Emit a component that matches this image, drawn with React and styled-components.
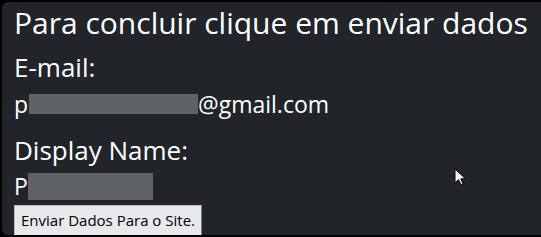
import React from "react";
import styled, { createGlobalStyle } from "styled-components";

const GlobalStyle = createGlobalStyle`
  html, body {
    margin: 0;
    padding: 0;
    background: #000;
  }
  body {
    padding: 2px 0 0 2px;
    font-family: "Open Sans", "Noto Sans", sans-serif;
    color: #fff;
    overflow: hidden;
  }
`;

const Card = styled.section`
  position: relative;
  background: #212529;
  border-radius: 6px;
  width: 560px;
  height: 233px;
  box-sizing: border-box;
  padding: 0 0 0 12px;
  display: flex;
  flex-direction: column;
  align-items: flex-start;
`;

const Title = styled.h4`
  margin: 0;
  font-size: 30px;
  font-weight: 400;
  line-height: 42px;
  white-space: nowrap;
`;

const Label = styled.h5`
  margin: ${(p) => p.$mt || 0}px 0 0;
  font-size: 26px;
  font-weight: 400;
  line-height: 40px;
  white-space: nowrap;
`;

const Value = styled.p`
  margin: ${(p) => p.$mt || 0}px 0 0;
  font-size: 23px;
  line-height: ${(p) => p.$h}px;
  height: ${(p) => p.$h}px;
  display: flex;
  align-items: center;
  white-space: nowrap;
`;

const Hidden = styled.span`
  display: inline-block;
  flex: none;
  background: #5f6366;
  width: ${(p) => p.$w}px;
  height: ${(p) => p.$hh}px;
  margin-left: ${(p) => p.$ml || 0}px;
`;

const SendButton = styled.button`
  margin-top: 6px;
  font-family: "Open Sans", "Noto Sans", sans-serif;
  font-size: 15px;
  line-height: 21px;
  color: #000;
  background: #e9e9ed;
  border: 1px solid #b8b8c0;
  border-right-color: #767676;
  border-bottom-color: #767676;
  border-radius: 0;
  padding: 4px 6px;
  white-space: nowrap;
`;

const Cursor = styled.svg`
  position: absolute;
  left: 452px;
  top: 166px;
`;

export default function App() {
  return (
    <>
      <GlobalStyle />
      <Card>
        <Title>Para concluir clique em enviar dados</Title>
        <Label $mt={3}>E-mail:</Label>
        <Value $h={34}>
          p<Hidden $w={169} $hh={20} $ml={1} />@gmail.com
        </Value>
        <Label $mt={9}>Display Name:</Label>
        <Value $h={26} $mt={3}>
          P<Hidden $w={125} $hh={27} $ml={0} />
        </Value>
        <SendButton type="button">Enviar Dados Para o Site.</SendButton>
        <Cursor width="13" height="19" viewBox="0 0 13 19">
          <path d="M1 1 L1 15 L4.5 11.5 L7 17 L9 16 L6.8 10.8 L11.5 10.8 Z" fill="#fff" stroke="#000" strokeWidth="1" />
        </Cursor>
      </Card>
    </>
  );
}
